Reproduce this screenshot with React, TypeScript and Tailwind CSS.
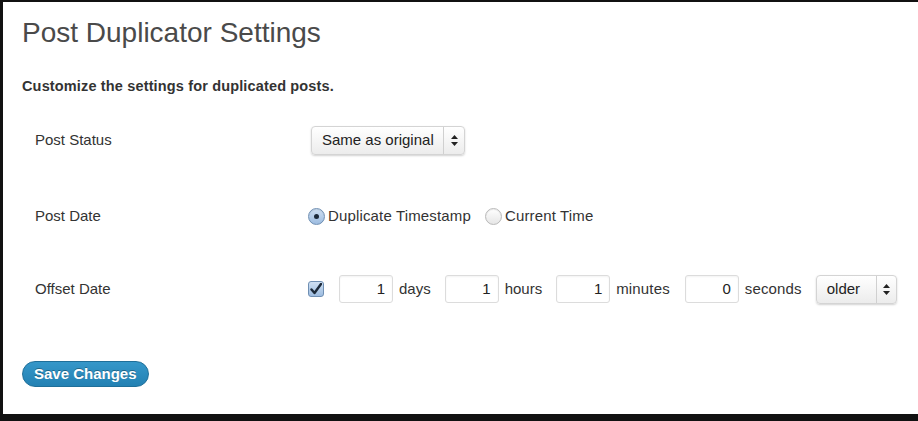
import React from "react";

const font = { fontFamily: '"Liberation Sans", Arial, Helvetica, sans-serif' };

const Arrows = () => (
  <svg width="7" height="11" viewBox="0 0 7 11" className="text-[#222]">
    <path d="M3.5 0 L7 4 L0 4 Z" fill="currentColor" />
    <path d="M0 7 L7 7 L3.5 11 Z" fill="currentColor" />
  </svg>
);

const FakeSelect = ({ label, width, labelWidth }: { label: string; width: string; labelWidth: string }) => (
  <div
    className={`flex h-[29px] ${width} items-stretch rounded-[4px] border border-[#d4d4d4] bg-gradient-to-b from-white to-[#ececec] shadow-[0_1px_2px_rgba(0,0,0,0.18)]`}
  >
    <div className={`flex ${labelWidth} items-center pl-[10px] text-[15px] text-[#222]`}>{label}</div>
    <div className="flex flex-1 items-center justify-center border-l border-[#d0d0d0]">
      <Arrows />
    </div>
  </div>
);

const Radio = ({ checked }: { checked?: boolean }) => (
  <span
    className={`flex h-[17px] w-[17px] items-center justify-center rounded-full border ${
      checked
        ? "border-[#6f8fb3] bg-gradient-to-b from-[#cfe0f3] to-[#9dbce0]"
        : "border-[#b9b9b9] bg-gradient-to-b from-white to-[#e6e6e6]"
    } shadow-[inset_0_1px_1px_rgba(0,0,0,0.08)]`}
  >
    {checked && <span className="h-[5px] w-[5px] rounded-full bg-[#1c2a3a]" />}
  </span>
);

const NumInput = ({ value }: { value: string }) => (
  <div className="flex h-[28px] w-[54px] items-center justify-end rounded-[3px] border border-[#dcdcdc] bg-white pr-[7px] text-[15px] text-[#222] shadow-[inset_0_1px_2px_rgba(0,0,0,0.05)]">
    {value}
  </div>
);

const Row = ({ label, children }: { label: string; children: React.ReactNode }) => (
  <div className="flex h-[30px] items-center">
    <div className="w-[286px] pl-[13px] text-[15px] text-[#333]">{label}</div>
    <div className="flex items-center">{children}</div>
  </div>
);

export default function App() {
  return (
    <div className="h-[421px] w-[918px] bg-[#111] pl-[3px] pt-[2px] pb-[7px]" style={font}>
      <div className="flex h-full flex-col bg-white pl-[19px] pt-[15px]">
        <h1 className="text-[28px] leading-[32px] text-[#4a4a4a]">Post Duplicator Settings</h1>

        <p className="mt-[28px] text-[14.5px] font-bold leading-[18px] tracking-[0.15px] text-[#333]">
          Customize the settings for duplicated posts.
        </p>

        <div className="mt-[30px]">
          <Row label="Post Status">
            <div className="ml-[3px]">
              <FakeSelect label="Same as original" width="w-[154px]" labelWidth="w-[131px]" />
            </div>
          </Row>
        </div>

        <div className="mt-[46px]">
          <Row label="Post Date">
            <Radio checked />
            <span className="ml-[3px] text-[15px] tracking-[0.15px] text-[#333]">Duplicate Timestamp</span>
            <span className="ml-[14px]">
              <Radio />
            </span>
            <span className="ml-[3px] text-[15px] tracking-[0.15px] text-[#333]">Current Time</span>
          </Row>
        </div>

        <div className="mt-[43px]">
          <Row label="Offset Date">
            <span className="flex h-[16px] w-[16px] items-center justify-center rounded-[3px] border border-[#6f8fb3] bg-gradient-to-b from-[#cfe0f3] to-[#9dbce0]">
              <svg width="12" height="12" viewBox="0 0 12 12">
                <path d="M1.5 6.5 L4.5 10 L11 1" fill="none" stroke="#1c2a3a" strokeWidth="2.4" strokeLinecap="round" strokeLinejoin="round" />
              </svg>
            </span>
            <div className="ml-[15px] flex items-center gap-[6px]">
              <NumInput value="1" />
              <span className="text-[15px] text-[#333]">days</span>
            </div>
            <div className="ml-[14px] flex items-center gap-[6px]">
              <NumInput value="1" />
              <span className="text-[15px] text-[#333]">hours</span>
            </div>
            <div className="ml-[14px] flex items-center gap-[6px]">
              <NumInput value="1" />
              <span className="text-[15px] tracking-[0.15px] text-[#333]">minutes</span>
            </div>
            <div className="ml-[15px] flex items-center gap-[6px]">
              <NumInput value="0" />
              <span className="text-[15px] tracking-[0.15px] text-[#333]">seconds</span>
            </div>
            <div className="ml-[14px]">
              <FakeSelect label="older" width="w-[81px]" labelWidth="w-[59px]" />
            </div>
          </Row>
        </div>

        <div className="mt-[57px]">
          <button className="h-[26px] rounded-full border border-[#1f6f99] bg-gradient-to-b from-[#3597c9] to-[#2381b3] px-[11px] text-[15px] font-bold text-white [text-shadow:0_-1px_0_rgba(0,0,0,0.3)]">
            Save Changes
          </button>
        </div>
      </div>
    </div>
  );
}
